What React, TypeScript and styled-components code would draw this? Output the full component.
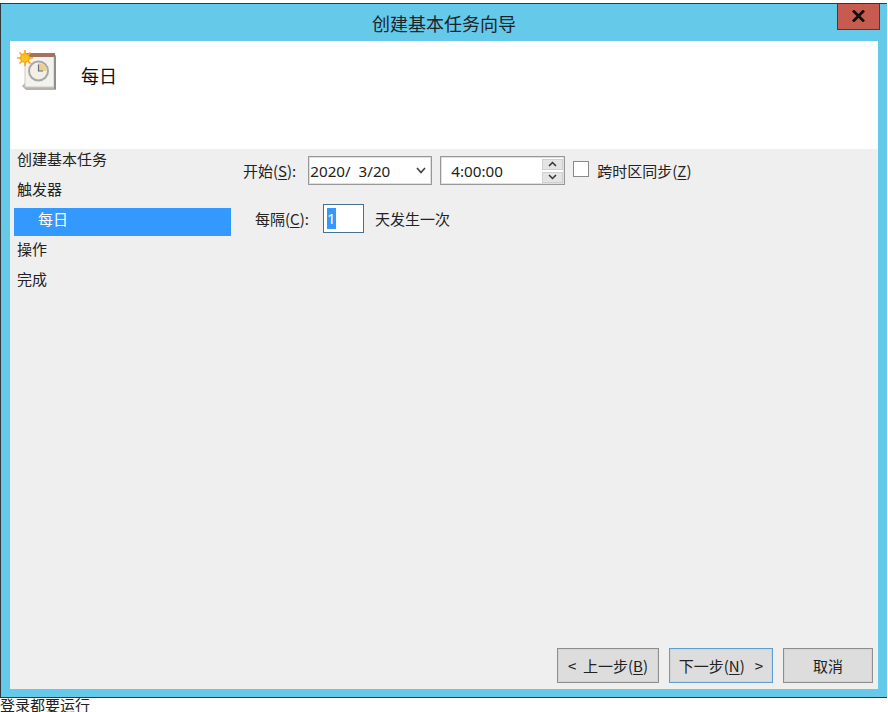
import styled, { createGlobalStyle } from 'styled-components';

const GlobalStyle = createGlobalStyle`
  html, body {
    margin: 0;
    padding: 0;
    background: #fff;
  }
  body {
    width: 888px;
    height: 712px;
    overflow: hidden;
    font-family: "Noto Sans CJK SC", "Liberation Sans", sans-serif;
    font-size: 15px;
    color: #222;
  }
`;

const Page = styled.div`
  width: 888px;
  height: 712px;
  padding-top: 3px;
  box-sizing: border-box;
  display: flex;
  flex-direction: column;
`;

const Window = styled.div`
  width: 887px;
  height: 695px;
  flex: none;
  box-sizing: border-box;
  background: #65c9ea;
  border: 1px solid #2f3a40;
  border-right: none;
  padding: 0 9px 8px 9px;
  display: flex;
  flex-direction: column;
`;

const TitleBar = styled.div`
  height: 37px;
  flex: none;
  position: relative;
  display: flex;
  align-items: center;
  justify-content: center;
  font-size: 18px;
  color: #1c2328;
`;

const CloseButton = styled.div`
  position: absolute;
  top: 0;
  right: -2px;
  width: 43px;
  height: 26px;
  box-sizing: border-box;
  background: #c75b50;
  border: 1px solid #53353a;
  border-top: none;
  padding-bottom: 2px;
  display: flex;
  align-items: center;
  justify-content: center;
`;

const Client = styled.div`
  flex: 1;
  min-height: 0;
  display: flex;
  flex-direction: column;
  background: #efefef;
`;

const Header = styled.div`
  height: 108px;
  flex: none;
  box-sizing: border-box;
  background: #fff;
  display: flex;
  align-items: flex-start;
  padding: 9px 0 0 7px;
  gap: 24px;
`;

const HeaderTitle = styled.div`
  font-size: 18px;
  line-height: 24px;
  margin-top: 13px;
  color: #111;
`;

const Body = styled.div`
  flex: 1;
  min-height: 0;
  display: flex;
`;

const Sidebar = styled.div`
  width: 221px;
  flex: none;
  padding: 0 0 0 4px;
  box-sizing: border-box;
  display: flex;
  flex-direction: column;
`;

const Step = styled.div<{ $active?: boolean }>`
  height: 28px;
  margin-bottom: 2px;
  line-height: 21px;
  padding-left: ${p => (p.$active ? '24px' : '3px')};
  background: ${p => (p.$active ? '#3399ff' : 'transparent')};
  color: ${p => (p.$active ? '#fff' : '#222')};
  white-space: nowrap;
  &:first-child {
    margin-top: -1px;
  }
`;

const Main = styled.div`
  flex: 1;
  min-width: 0;
  display: flex;
  flex-direction: column;
  padding: 7px 5px 6px 12px;
`;

const Row = styled.div`
  display: flex;
  align-items: center;
  height: 29px;
`;

const Label = styled.span<{ $indent?: number }>`
  margin-left: ${p => p.$indent ?? 0}px;
  white-space: nowrap;
  font-size: 15px;
`;

const Field = styled.div<{ $width: number }>`
  width: ${p => p.$width}px;
  height: 29px;
  box-sizing: border-box;
  background: #fff;
  border: 1px solid #989898;
  box-shadow: inset 0 0 0 1px #e0e0e0;
  display: flex;
  align-items: center;
  font-family: "Noto Sans", "Liberation Sans", sans-serif;
  font-size: 15.2px;
  color: #222;
`;

const DateField = styled(Field)`
  margin-left: 12px;
  padding: 0 5px 0 1px;
  justify-content: space-between;
  white-space: pre;
`;

const TimeField = styled(Field)`
  margin-left: 8px;
  padding: 0 1px 0 10px;
  justify-content: space-between;
`;

const Spin = styled.div`
  width: 21px;
  height: 24px;
  display: flex;
  flex-direction: column;
  justify-content: space-between;
`;

const SpinButton = styled.div`
  height: 11px;
  background: #e4e4e4;
  border: 1px solid #cfcfcf;
  box-sizing: border-box;
  display: flex;
  align-items: center;
  justify-content: center;
`;

const Checkbox = styled.div`
  width: 16px;
  height: 16px;
  box-sizing: border-box;
  margin: 0 8px 3px 8px;
  background: #fff;
  border: 1px solid #8a8a8a;
`;

const Key = styled.span`
  text-decoration: underline;
  text-underline-offset: 2px;
`;

const IntervalRow = styled(Row)`
  margin-top: 19px;
`;

const NumberField = styled(Field)`
  margin-left: 14px;
  padding: 0 0 0 3px;
  border-color: #49708f;
  box-shadow: none;
`;

const Selected = styled.span`
  background: #3399ff;
  color: #fff;
  width: 9px;
  height: 21px;
  line-height: 21px;
  text-align: center;
`;

const Unit = styled(Label)`
  margin-left: 11px;
`;

const Footer = styled.div`
  margin-top: auto;
  display: flex;
  justify-content: flex-end;
  gap: 10px;
`;

const Button = styled.div<{ $width: number; $focused?: boolean }>`
  width: ${p => p.$width}px;
  height: 35px;
  box-sizing: border-box;
  background: #dddddd;
  border: 1px solid ${p => (p.$focused ? '#5f9ecf' : '#8e8e8e')};
  box-shadow: inset 0 0 0 1px #d4d4d4;
  display: flex;
  align-items: center;
  justify-content: center;
  font-size: 15px;
  white-space: pre;
  color: #222;
`;

const TaskIcon = () => (
  <svg width="40" height="40" viewBox="0 0 40 40">
    <path d="M5 36 L8 33 L8 5 L39 5 L39 40 L9 40 Z" fill="#b5b1ac" />
    <rect x="8" y="4" width="29" height="33" fill="#f4f2ef" stroke="#cfc9c2" />
    <rect x="8" y="3" width="30" height="4" fill="#a4715c" />
    <rect x="37" y="6" width="2" height="33" fill="#8f8f8f" />
    <circle cx="21.5" cy="21" r="10.5" fill="#a8a8a8" />
    <circle cx="21.5" cy="21" r="8.5" fill="#f3efe6" />
    <path d="M21.5 21 V13 A8 8 0 0 1 29.5 21 Z" fill="#f0cf8d" />
    <path d="M21.5 14.5 V21 H26" fill="none" stroke="#5b6f8a" strokeWidth="1.2" />
    <circle cx="8" cy="8" r="5" fill="#f8a80c" />
    <path
      d="M8 0 V16 M0 8 H16 M2.5 2.5 L13.5 13.5 M13.5 2.5 L2.5 13.5"
      stroke="#f9a61a"
      strokeWidth="1.7"
    />
    <circle cx="8" cy="8" r="3.6" fill="#ffc21f" />
  </svg>
);

const Chevron = () => (
  <svg width="10" height="7" viewBox="0 0 10 7">
    <path d="M1 1 L5 5.5 L9 1" fill="none" stroke="#444" strokeWidth="1.7" />
  </svg>
);

const SpinArrow = ({ up }: { up?: boolean }) => (
  <svg width="9" height="6" viewBox="0 0 9 6">
    <path
      d={up ? 'M1 5 L4.5 1.5 L8 5' : 'M1 1 L4.5 4.5 L8 1'}
      fill="none"
      stroke="#333"
      strokeWidth="1.5"
    />
  </svg>
);

const CloseGlyph = () => (
  <svg width="13" height="12" viewBox="0 0 13 12">
    <path d="M1 0.5 L12 11.5 M12 0.5 L1 11.5" stroke="#111" strokeWidth="2.8" />
  </svg>
);

const Overflow = styled.div`
  font-size: 15px;
  line-height: 14px;
  height: 14px;
  color: #222;
  white-space: nowrap;
`;

export default function App() {
  return (
    <>
      <GlobalStyle />
      <Page>
        <Window>
          <TitleBar>
            创建基本任务向导
            <CloseButton>
              <CloseGlyph />
            </CloseButton>
          </TitleBar>
          <Client>
            <Header>
              <TaskIcon />
              <HeaderTitle>每日</HeaderTitle>
            </Header>
            <Body>
              <Sidebar>
                <Step>创建基本任务</Step>
                <Step>触发器</Step>
                <Step $active>每日</Step>
                <Step>操作</Step>
                <Step>完成</Step>
              </Sidebar>
              <Main>
                <Row>
                  <Label>
                    开始(<Key>S</Key>):
                  </Label>
                  <DateField $width={124}>
                    <span>2020/  3/20</span>
                    <Chevron />
                  </DateField>
                  <TimeField $width={125}>
                    <span>4:00:00</span>
                    <Spin>
                      <SpinButton>
                        <SpinArrow up />
                      </SpinButton>
                      <SpinButton>
                        <SpinArrow />
                      </SpinButton>
                    </Spin>
                  </TimeField>
                  <Checkbox />
                  <Label>
                    跨时区同步(<Key>Z</Key>)
                  </Label>
                </Row>
                <IntervalRow>
                  <Label $indent={12}>
                    每隔(<Key>C</Key>):
                  </Label>
                  <NumberField $width={41}>
                    <Selected>1</Selected>
                  </NumberField>
                  <Unit>天发生一次</Unit>
                </IntervalRow>
                <Footer>
                  <Button $width={102}>
                    {'<  上一步('}
                    <Key>B</Key>)
                  </Button>
                  <Button $width={104} $focused>
                    下一步(<Key>N</Key>
                    {')   >'}
                  </Button>
                  <Button $width={90}>取消</Button>
                </Footer>
              </Main>
            </Body>
          </Client>
        </Window>
        <Overflow>登录都要运行</Overflow>
      </Page>
    </>
  );
}
